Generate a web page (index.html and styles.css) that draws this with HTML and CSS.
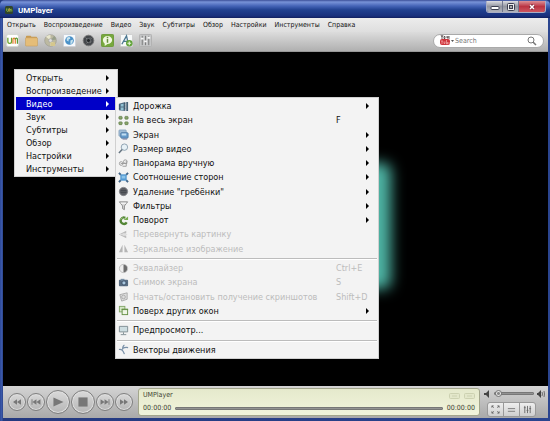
FILE: index.html
```html
<!DOCTYPE html>
<html lang="ru">
<head>
<meta charset="utf-8">
<title>UMPlayer</title>
<link rel="stylesheet" href="styles.css">
</head>
<body>
<div class="window">
  <header class="titlebar">
    <svg class="app-icon" viewBox="0 0 10 10"><rect width="10" height="10" rx="2" fill="#31452b"/><path d="M2 3v3q1 2 2 0V3M5 7V4q1-1 1.500 0v3M6.500 4.500q1.500-1.500 2 0V7" fill="none" stroke="#8bc34a"/><path d="M5 7V4q1-1 1.500 0" fill="none" stroke="#e39a35"/></svg>
    <h1 class="title">UMPlayer</h1>
    <div class="window-buttons">
      <button class="wbtn" aria-label="Свернуть"><svg viewBox="0 0 14 10"><rect x="3" y="4.500" width="8" height="3" rx="1" fill="#fff" stroke="#3c3f50"/></svg></button>
      <button class="wbtn" aria-label="Развернуть"><svg viewBox="0 0 14 10"><rect x="3.500" y="1.500" width="7" height="7" rx="1" fill="#eee" stroke="#3c3f50"/><rect x="5.500" y="3.500" width="3" height="3" fill="#aaa" stroke="#3c3f50"/></svg></button>
      <button class="wbtn close" aria-label="Закрыть"><svg viewBox="0 0 14 10"><path d="M5 3l4 4M9 3l-4 4" stroke="#7b2030" stroke-width="3"/><path d="M5 3l4 4M9 3l-4 4" stroke="#fff" stroke-width="1.500"/></svg></button>
    </div>
  </header>

  <nav class="menubar">
    <button>Открыть</button><button>Воспроизведение</button><button>Видео</button><button>Звук</button><button>Субтитры</button><button>Обзор</button><button>Настройки</button><button>Инструменты</button><button>Справка</button>
  </nav>

  <div class="toolbar">
    <div class="tools">
      <button aria-label="UMPlayer"><svg viewBox="0 0 14 14"><rect x=".5" y=".5" width="13" height="13" rx="2" fill="#fff" stroke="#d4d8cf"/><path d="M2 4v4q0 2 2 2t2-2V4" fill="none" stroke="#6da52c" stroke-width="1.400"/><path d="M7.500 10.500V6q0-1.500 1.200-1.500T10 6v4.500" fill="none" stroke="#e07d2d" stroke-width="1.300"/><path d="M10 6q0-1.500 1.200-1.500T12.300 6v4.500" fill="none" stroke="#579a32" stroke-width="1.300"/></svg></button>
      <button aria-label="Открыть файл"><svg viewBox="0 0 14 14"><path d="M1 3q0-1 1-1h4l1 1h5q1 0 1 1v7H1z" fill="#c79a52"/><rect x=".5" y="4" width="13" height="9" rx="1" fill="#e5bd78" stroke="#c39b5d" stroke-width=".6"/></svg></button>
      <button aria-label="Открыть диск"><svg viewBox="0 0 14 14"><circle cx="7" cy="7" r="6.300" fill="#bcb9a1" stroke="#96968c" stroke-width=".6"/><path d="M7 7L2 3a6 6 0 0 1 5-2zM7 7l5 4a6 6 0 0 1-5 2z" fill="#e8e6cd"/><path d="M7 7l6-1a6 6 0 0 0-2-4z" fill="#989f8b"/><circle cx="7" cy="7" r="2" fill="#ddd" stroke="#999" stroke-width=".6"/><path d="M7 9h5v4H7z" fill="#d5c78d"/></svg></button>
      <button aria-label="Открыть адрес"><svg viewBox="0 0 14 14"><rect x=".5" y=".5" width="13" height="13" rx="1" fill="#f7f9fb" stroke="#ccd1d8"/><circle cx="7" cy="7" r="4.700" fill="#4a91c8"/><path d="M4 4l3-1 1 2-2 1v2L4 7zM8 7l3-1-1 4-2 1z" fill="#c7e3ef"/></svg></button>
      <button aria-label="Запись"><svg viewBox="0 0 14 14"><circle cx="7" cy="7" r="5.700" fill="#45484c" stroke="#777"/><circle cx="7" cy="7" r="2.200" fill="#24272a" stroke="#85898d" stroke-width=".7"/><path d="M4 4l1 1M9 4l1 1M10 8l-1 1M5 10l1-1" stroke="#999"/></svg></button>
      <button aria-label="Сведения"><svg viewBox="0 0 14 14"><rect x=".5" y=".5" width="13" height="13" rx="1" fill="#77a83d" stroke="#6c9938"/><path d="M2 6.500a5 4.300 0 1 1 5 4.300L4 13v-2.500Q2 9 2 6.500z" fill="#f0f7df"/><path d="M7 3v1.500M7 5.500v4" stroke="#668e3c" stroke-width="1.600"/></svg></button>
      <button aria-label="Субтитры"><svg viewBox="0 0 14 14"><rect x=".5" y=".5" width="13" height="13" rx="1" fill="#f7f9f9" stroke="#ccc"/><path d="M2 11L7 2l2 9M4 8h4" fill="none" stroke="#4c7790" stroke-width="1.400"/><circle cx="10" cy="10" r="3.500" fill="#62a33b"/><path d="M10 8v4M8 10h4" stroke="#e5f4d7" stroke-width="1.200"/></svg></button>
      <button aria-label="Эквалайзер"><svg viewBox="0 0 14 14"><rect x=".5" y=".5" width="13" height="13" rx="1" fill="#c5c6c7" stroke="#b0b0b0"/><path d="M3.500 2v10M7 2v10M10.500 2v10" stroke="#777"/><path d="M2 5h3M5.500 8h3M9 4h3" stroke="#f4f4f4" stroke-width="2"/></svg></button>
    </div>
    <label class="search">
      <svg class="youtube" viewBox="0 0 14 11"><path d="M1 0l1 2 1-2M2 2v2M4 1.500h1v2H4zM7 1v2h1V1M9 1v3" fill="none" stroke="#443536" stroke-width=".8"/><rect y="4" width="10" height="6" rx="2" fill="#ce353c"/><path d="M1 6h2M2 6v3M4 6.500v2h1v-2M6.500 5v4h1V7M9 7v2" fill="none" stroke="#f6b3b1" stroke-width=".7"/><path d="M11 5h3l-1.500 2z" fill="#555"/></svg>
      <input type="text" placeholder="Search" aria-label="Search">
      <svg class="lens" viewBox="0 0 10 10"><circle cx="4" cy="4" r="3" fill="none" stroke="#777"/><path d="M6 6l3 3" stroke="#777" stroke-width="1.500"/></svg>
    </label>
  </div>

  <main class="video">
    <div class="glow"></div>
    <div class="menu context">
      <button class="sub">Открыть</button>
      <button class="sub">Воспроизведение</button>
      <button class="sub active">Видео</button>
      <button class="sub">Звук</button>
      <button class="sub">Субтитры</button>
      <button class="sub">Обзор</button>
      <button class="sub">Настройки</button>
      <button class="sub">Инструменты</button>
    </div>
    <div class="menu submenu">
      <button class="sub"><svg viewBox="0 0 12 12"><path d="M1 3l7-2v10l-7-1z" fill="#526e83"/><path d="M3 3.500l3-.5v3H3zM3 7h3v3H3z" fill="#91c1d3"/><path d="M9 1h2v10H9z" fill="#496478"/><path d="M1.500 4v6M7.500 2v8" stroke="#243d50" stroke-dasharray="1 1"/></svg>Дорожка</button>
      <button><svg viewBox="0 0 12 12"><g fill="#8ba66c" stroke="#5f7c49" stroke-width=".8"><rect x="1" y="1.500" width="3.500" height="3" rx=".8"/><rect x="7.500" y="1.500" width="3.500" height="3" rx=".8"/><rect x="1" y="7.500" width="3.500" height="3" rx=".8"/><rect x="7.500" y="7.500" width="3.500" height="3" rx=".8"/></g></svg>На весь экран<kbd>F</kbd></button>
      <button class="sub"><svg viewBox="0 0 12 12"><rect x="1" y="1" width="8" height="7" rx="1" fill="#9fbbd5" stroke="#7897b3" stroke-width=".7"/><rect x="3" y="4" width="8" height="6" rx="1" fill="#659acb" stroke="#557da5"/><path d="M4 5h5v2H4z" fill="#c3def2"/><path d="M5 11h5" stroke="#779"/></svg>Экран</button>
      <button class="sub"><svg viewBox="0 0 12 12"><circle cx="7" cy="4.500" r="3.500" fill="#e7f1f6" stroke="#8a9ead"/><path d="M4.500 7L1 11" stroke="#657481" stroke-width="1.600"/></svg>Размер видео</button>
      <button class="sub"><svg viewBox="0 0 12 12"><g fill="none" stroke="#999"><circle cx="3.500" cy="6" r="2"/><circle cx="8" cy="4" r="2"/><path d="M5 9h4V3M3 6h7"/></g></svg>Панорама вручную</button>
      <button class="sub"><svg viewBox="0 0 12 12"><rect x="2.500" y="2.500" width="7" height="7" fill="#559bd4"/><path d="M1 1l2 2M11 1L9 3M11 11L9 9M1 11l2-2" stroke="#426688" stroke-width="2"/><path d="M4 4h4v3H4z" fill="#8dc4e8"/></svg>Соотношение сторон</button>
      <button class="sub"><svg viewBox="0 0 12 12"><circle cx="6" cy="6" r="4.500" fill="#5b5d62" stroke="#85878b"/><path d="M3 5h6M3 7h6" stroke="#44474d"/></svg>Удаление "гребёнки"</button>
      <button class="sub"><svg viewBox="0 0 12 12"><path d="M1.500 2h9L7 6.500v4l-2-1v-3z" fill="#d6d6d6" stroke="#888"/><path d="M3 3.500h6" stroke="#fff"/></svg>Фильтры</button>
      <button class="sub"><svg viewBox="0 0 12 12"><path d="M8 3A3.500 3.500 0 1 0 9.500 8" fill="none" stroke="#548636" stroke-width="2.500"/><path d="M6 5.500h5v-4z" fill="#78ad4f"/><path d="M3 5a3 3 0 0 1 2-2" fill="none" stroke="#b2d194"/></svg>Поворот</button>
      <button disabled><svg viewBox="0 0 12 12"><path d="M1 6l8-4v3H5v2h4v3z" fill="#bbb"/><path d="M2 6h8" stroke="#ddd"/></svg>Перевернуть картинку</button>
      <button disabled><svg viewBox="0 0 12 12"><path d="M5 2v8H1zM7 2l4 8H7z" fill="#b5b5b5"/></svg>Зеркальное изображение</button>
      <hr>
      <button disabled><svg viewBox="0 0 12 12"><circle cx="6" cy="6" r="4.500" fill="#eee" stroke="#bbb"/><path d="M6 2a4 4 0 0 1 0 8z" fill="#6d6d6d"/></svg>Эквалайзер<kbd>Ctrl+E</kbd></button>
      <button disabled><svg viewBox="0 0 12 12"><rect x="1" y="3" width="10" height="7" rx="1" fill="#596d82"/><path d="M3 2h4v2H3z" fill="#7890a6"/><circle cx="6.500" cy="6.500" r="2.300" fill="#aac8df" stroke="#3c4f67"/></svg>Снимок экрана<kbd>S</kbd></button>
      <button disabled><svg viewBox="0 0 12 12"><path d="M2 4l8-2v7l-6 2z" fill="#ddd" stroke="#aaa"/><circle cx="6" cy="6.500" r="2" fill="none" stroke="#aaa"/></svg>Начать/остановить получение скриншотов<kbd>Shift+D</kbd></button>
      <button class="sub"><svg viewBox="0 0 12 12"><rect x="1.500" y="1.500" width="6" height="6" fill="#d6e7c7" stroke="#83a666"/><rect x="4.500" y="4.500" width="6" height="6" fill="#eef5e5" stroke="#648e43"/><path d="M4 5h7" stroke="#648e43"/></svg>Поверх других окон</button>
      <hr>
      <button><svg viewBox="0 0 12 12"><path d="M1.500 1.500h9v6h-9z" fill="#cddde1" stroke="#7d8b90"/><path d="M6 8v2M3 10.500h6" stroke="#7d8b90"/></svg>Предпросмотр...</button>
      <hr>
      <button><svg viewBox="0 0 12 12"><path d="M1 6q4-1 6 5M5 6q0-4 2-5M5 5q3-2 6-1" fill="none" stroke="#7990a8" stroke-width="1.300"/></svg>Векторы движения</button>
    </div>
  </main>

  <footer class="controls">
    <div class="transport">
      <button class="round" aria-label="Назад"><svg viewBox="0 0 18 18"><path d="M9 6v6L4.500 9zM13.500 6v6L9 9z"/></svg></button>
      <button class="round" aria-label="Предыдущий"><svg viewBox="0 0 18 18"><path d="M4 6h1v6H4zM9.500 6v6L5 9zM14 6v6L9.500 9z"/></svg></button>
      <button class="round big" aria-label="Воспроизвести"><svg viewBox="0 0 24 24"><path d="M7 7l11 5-11 5z"/></svg></button>
      <button class="round big" aria-label="Стоп"><svg viewBox="0 0 24 24"><path d="M7 7h10v10H7z"/></svg></button>
      <button class="round" aria-label="Следующий"><svg viewBox="0 0 18 18"><path d="M4 6v6l4.500-3zM8.500 6v6L13 9zM13 6h1v6h-1z"/></svg></button>
      <button class="round" aria-label="Вперёд"><svg viewBox="0 0 18 18"><path d="M4.500 6v6L9 9zM9 6v6l4.500-3z"/></svg></button>
    </div>
    <div class="display">
      <div class="line"><span>UMPlayer</span><svg viewBox="0 0 26 8"><g fill="#e3e7ca" stroke="#ccd1b1"><rect x=".5" y="1.500" width="10" height="5" rx="1"/><rect x="15.500" y="1.500" width="10" height="5" rx="1"/><path d="M3 4h5M18 4h5"/></g></svg></div>
      <div class="line"><span>00:00:00</span><input class="seek" type="range" value="0" aria-label="Позиция"><span>00:00:00</span></div>
    </div>
    <div class="side">
      <div class="volume">
        <svg viewBox="0 0 8 8"><path d="M1 3h2l3-3v8L3 5H1z" fill="#444"/></svg>
        <input type="range" value="0" aria-label="Громкость">
        <svg viewBox="0 0 8 8"><path d="M0 3h1l3-3v8L1 5H0z" fill="#444"/><path d="M5 2q1 2 0 4M7 1q1 3 0 6" fill="none" stroke="#555" stroke-width=".8"/></svg>
      </div>
      <div class="modes">
        <button aria-label="Полный экран"><svg viewBox="0 0 10 10"><path d="M1 3V1h2M1 1l2 2M7 1h2v2M9 1L7 3M9 7v2H7M9 9L7 7M3 9H1V7M1 9l2-2" fill="none" stroke="#666"/></svg></button>
        <button aria-label="Плейлист"><svg viewBox="0 0 10 10"><path d="M1 4h8M1 7h8" stroke="#777"/></svg></button>
        <button aria-label="Настройка звука"><svg viewBox="0 0 10 10"><path d="M2 1v8M5 1v8M8 1v8M1 3h2M4 6h2M7 4h2" stroke="#666"/></svg></button>
      </div>
    </div>
  </footer>
</div>
</body>
</html>
```

FILE: styles.css
```css
* { box-sizing: border-box; }
body { margin: 0; background: #24397f; font-family: "DejaVu Sans Condensed", "DejaVu Sans", sans-serif; }
button { margin: 0; padding: 0; border: 0; background: none; color: inherit; font: inherit; }
svg { display: block; flex: none; }

.window {
  display: flex; flex-direction: column; min-height: 100vh;
  padding: 0 2px 3px 3px;
  background: linear-gradient(90deg, #2d4898, #3d5cac 2px, #24397f 3px, #2b458f);
  border-radius: 5px 5px 0 0; overflow: hidden;
}

.titlebar {
  display: flex; align-items: center; height: 18px; margin: 0 -2px 0 -3px; padding: 0 4px 0 5px;
  background: linear-gradient(#3b4f98 0, #7893d8 2px, #4564b7 6px, #20408f 10px, #182f7c 16px, #101f5d);
}
.app-icon { width: 8px; height: 8px; margin-top: 2px; }
.title { flex: 1; margin: 2px 0 0 5px; color: #fff; font: bold 8px Roboto, sans-serif; }
.window-buttons { display: flex; align-self: flex-start; border: 1px solid #a9aec5; border-top: 0; border-radius: 0 0 3px 3px; overflow: hidden; margin-top: 1px; }
.wbtn { display: flex; align-items: center; justify-content: center; width: 16px; height: 11px; background: linear-gradient(#dcdce2, #92959f 50%, #b3b5bd); border-right: 1px solid #72778d; }
.wbtn svg { width: 14px; height: 10px; }
.wbtn.close { width: 26px; border: 0; background: linear-gradient(#dc9298, #bb3442 50%, #ce5660); }

.menubar {
  display: flex; align-items: center; gap: 8px; height: 14px; padding: 0 4px;
  background: linear-gradient(#ececec, #dedede); color: #111; font-size: 7px; line-height: 12px;
}
.toolbar { display: flex; align-items: center; justify-content: space-between; height: 20px; padding: 0 4px 2px 3px; background: linear-gradient(#dcdcdc, #b0b0b0); border-bottom: 1px solid #989898; }
.tools { display: flex; gap: 6px; }
.tools svg { width: 13px; height: 13px; }
.search { display: flex; align-items: center; width: 111px; height: 14px; padding: 0 6px; border: 1px solid #aaa; border-radius: 7px; background: #fff; }
.search input { flex: 1; min-width: 0; padding: 0 1px; border: 0; outline: 0; background: none; font: 7px "DejaVu Sans Condensed", sans-serif; }
.search input::placeholder { color: #777; }
.youtube { width: 14px; height: 11px; }
.lens { width: 10px; height: 10px; }

.video { position: relative; flex: 1; background: #000; overflow: hidden; }
.glow { position: absolute; left: 320px; top: 111px; width: 68px; height: 126px; border-radius: 8px; background: #4eb5a5; filter: blur(7px); }

.menu { position: absolute; display: flex; flex-direction: column; border: 1px solid #d0d0d0; background: #f3f3f3; color: #111; font-size: 9px; white-space: nowrap; }
.menu button { display: flex; align-items: center; position: relative; text-align: left; }
.menu .sub::after { content: ""; margin-left: auto; border: 3px solid transparent; border-left: 3px solid #000; border-right: 0; }
.menu .active { background: #0000c8; color: #fff; }
.menu .active::after { border-left-color: #fff; }
.context { left: 11px; top: 17px; width: 104px; padding: 1px; }
.context button { height: 13px; padding: 0 7px 0 10px; }
.submenu { left: 112px; top: 45px; width: 264px; height: 262px; padding: 1px; justify-content: space-between; }
.submenu button { height: 14px; padding: 0 8px 0 1px; gap: 4px; }
.submenu svg { width: 11px; height: 11px; }
.submenu button:disabled { color: #bcbcbc; }
.submenu hr { width: 100%; margin: 2px 0 1px; border: 0; border-top: 1px solid #bcbcbc; border-bottom: 1px solid #fff; }
.submenu kbd { position: absolute; left: 219px; font: inherit; }

.controls { display: flex; align-items: center; height: 32px; padding: 0 3px 0 5px; background: linear-gradient(#d4d4d4, #a9a9a9); }
.transport { display: flex; align-items: center; gap: 1px; }
.round { width: 18px; height: 18px; border: 1px solid #7f7f7f; border-radius: 50%; background: linear-gradient(#d9d9d9, #b6b6b6); box-shadow: inset 0 0 0 1px #dedede; }
.round.big { width: 24px; height: 24px; }
.round svg { width: 100%; height: 100%; fill: #777; }
.display {
  flex: 1; display: flex; flex-direction: column; justify-content: space-between; height: 28px; margin: 0 3px 0 5px; padding: 1px 4px;
  border: 1px solid #a3a68c; border-radius: 3px; background: linear-gradient(#e5e9cc, #f1f4dc);
  color: #3c3f30; font-size: 7px; line-height: 11px;
}
.line { display: flex; align-items: center; justify-content: space-between; gap: 4px; }
.line svg { width: 26px; height: 8px; }
input[type="range"] { appearance: none; flex: 1; min-width: 0; height: 8px; margin: 0; background: none; }
input[type="range"]::-webkit-slider-runnable-track { height: 3px; border: 1px solid #777; border-radius: 1px; background: #929292; }
.seek::-webkit-slider-runnable-track { background: #aeb09c; border-color: #929580; }
.seek::-webkit-slider-thumb { appearance: none; width: 1px; height: 1px; }
.side { width: 62px; }
.volume { display: flex; align-items: center; gap: 3px; height: 12px; }
.volume svg { width: 8px; height: 8px; }
.volume input::-webkit-slider-thumb { appearance: none; width: 7px; height: 7px; margin-top: -3px; border: 1px solid #777; border-radius: 50%; background: radial-gradient(#888 1px, #e5e5e5 2px); }
.modes { display: flex; width: 49px; margin: 2px 0 0 4px; border: 1px solid #999; border-radius: 3px; background: linear-gradient(#eee, #cfcfcf); }
.modes button { flex: 1; display: flex; align-items: center; justify-content: center; height: 13px; }
.modes button + button { border-left: 1px solid #999; }
.modes svg { width: 9px; height: 9px; }
```
